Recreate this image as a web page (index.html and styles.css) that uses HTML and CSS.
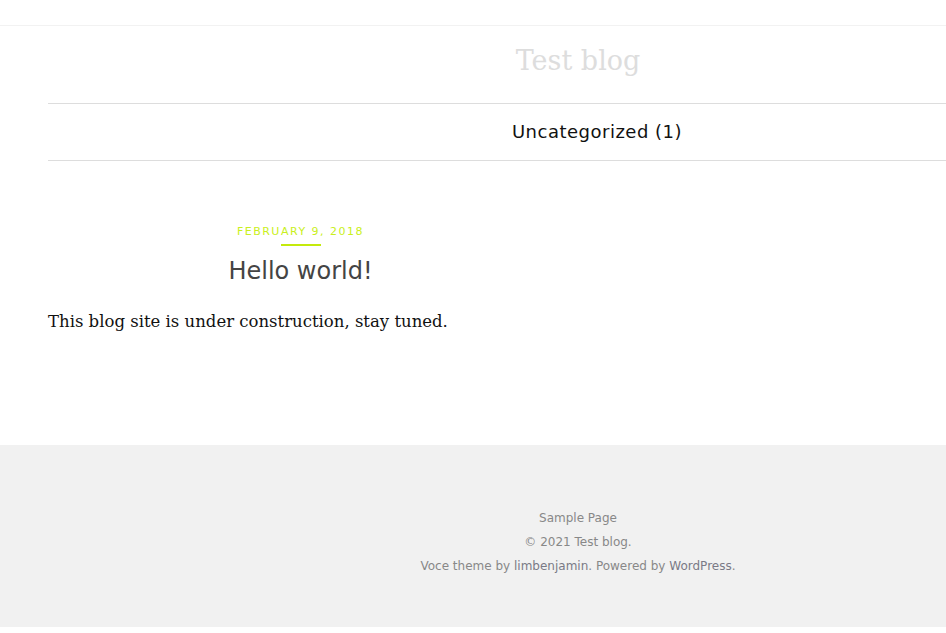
FILE: index.html
```html
<!DOCTYPE html>
<html lang="en">
<head>
<meta charset="utf-8">
<title>Test blog</title>
<link rel="stylesheet" href="styles.css">
</head>
<body>
<div class="page">
  <div class="topbar"></div>
  <header class="site-header">
    <h1 class="site-title">Test blog</h1>
    <nav class="cat-nav"><a href="#">Uncategorized (1)</a></nav>
  </header>
  <main class="content">
    <article class="post">
      <div class="post-head">
        <div class="post-date">February 9, 2018</div>
        <div class="date-bar"></div>
        <h2 class="post-title">Hello world!</h2>
      </div>
      <p class="post-body">This blog site is under construction, stay tuned.</p>
    </article>
  </main>
  <footer class="site-footer">
    <div class="foot-line"><a href="#">Sample Page</a></div>
    <div class="foot-line">© 2021 Test blog.</div>
    <div class="foot-line">Voce theme by <a class="lnk" href="#">limbenjamin</a>. Powered by <a class="lnk" href="#">WordPress</a>.</div>
  </footer>
</div>
</body>
</html>
```
FILE: styles.css
```css
html, body { margin: 0; padding: 0; overflow: hidden; background: #fff; }
.page { width: 1156px; font-family: "DejaVu Sans", sans-serif; }
a { text-decoration: none; color: inherit; }
.topbar { height: 25px; border-bottom: 1px solid #f2f2f2; }
.site-header { margin: 0 48px; }
.site-title {
  margin: 0; height: 78px; box-sizing: border-box; padding-bottom: 9px;
  display: flex; align-items: center; justify-content: center;
  font-family: "DejaVu Serif", serif; font-weight: normal; font-size: 27px; color: #dddddd;
  border-bottom: 1px solid #dddddd;
}
.cat-nav {
  height: 57px; box-sizing: border-box; padding-bottom: 2px;
  display: flex; align-items: center; justify-content: center;
  padding-left: 38px; border-bottom: 1px solid #dddddd;
  font-size: 18px; color: #111; letter-spacing: 0.5px;
}
.content { padding: 64px 48px 0; height: 220px; }
.post { width: 505px; }
.post-head { display: flex; flex-direction: column; align-items: center; }
.post-date { text-transform: uppercase; font-size: 11px; letter-spacing: 1.5px; color: #c9ef20; line-height: 14px; }
.date-bar { width: 40px; height: 2px; background: #c4ea0c; margin-top: 5px; }
.post-title { margin: 7px 0 0; font-weight: normal; font-size: 24px; color: #444; line-height: 36px; }
.post-body { margin: 23px 0 0; font-family: "DejaVu Serif", serif; font-size: 16.5px; color: #111; }
.site-footer {
  background: #f1f1f1; height: 182px; box-sizing: border-box; padding-top: 61px;
  display: flex; flex-direction: column; align-items: center;
  font-size: 12px; color: #888;
}
.foot-line { line-height: 24px; }
.lnk { color: #7a7a86; }
```
